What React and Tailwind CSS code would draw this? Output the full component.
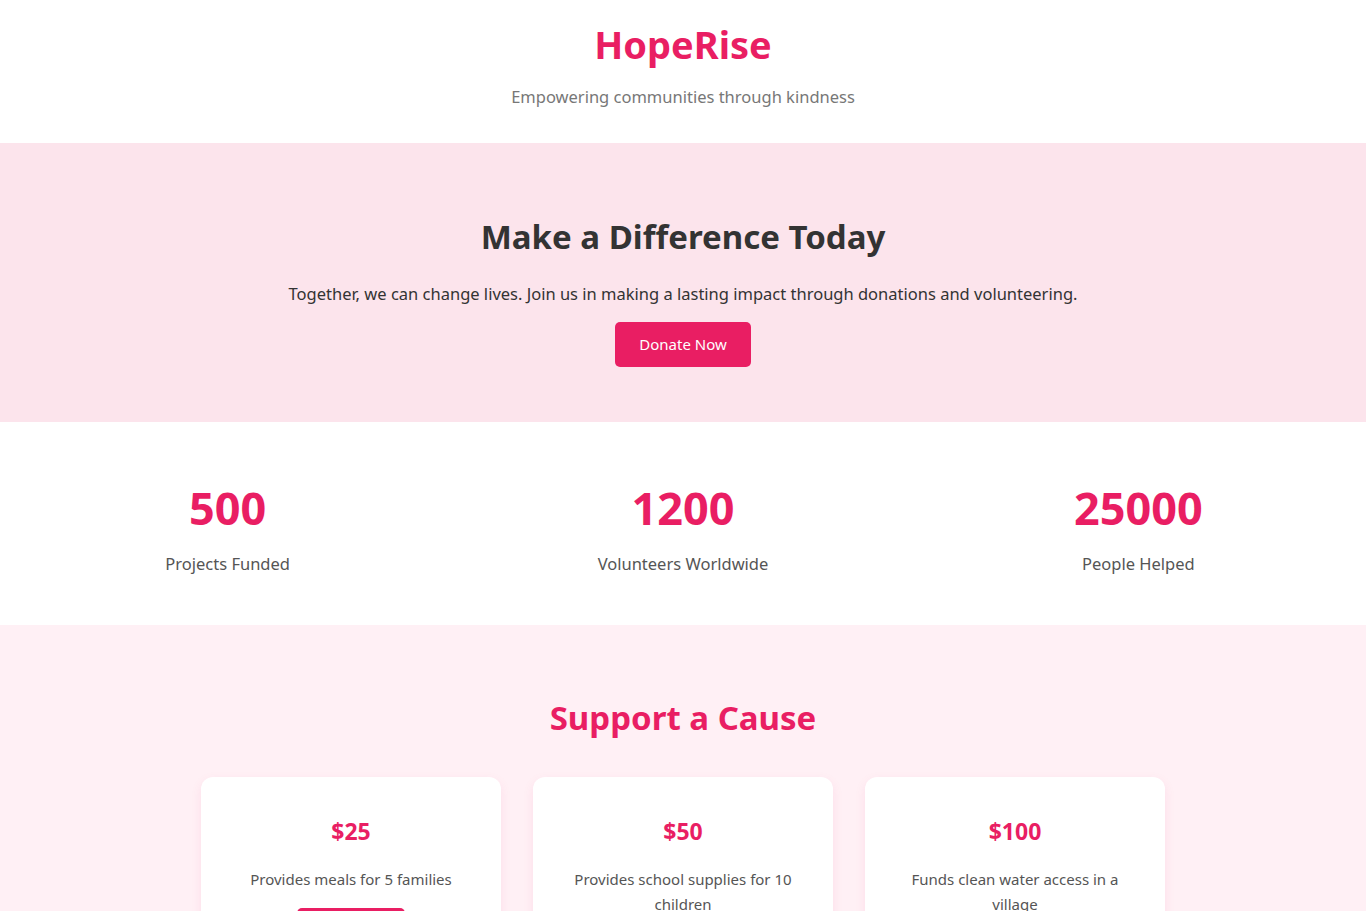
import React from "react";

const stats = [
  { value: "500", label: "Projects Funded" },
  { value: "1200", label: "Volunteers Worldwide" },
  { value: "25000", label: "People Helped" },
];

const causes = [
  { amount: "$25", text: "Provides meals for 5 families" },
  { amount: "$50", text: "Provides school supplies for 10 children" },
  { amount: "$100", text: "Funds clean water access in a village" },
];

function App() {
  return (
    <div className="min-h-screen bg-white text-[#333] font-['Noto_Sans',sans-serif]">
      {/* header */}
      <header className="pt-[20px] pb-[33px] text-center">
        <h1 className="text-[38px] leading-[48px] font-bold text-[#e91e63]">HopeRise</h1>
        <p className="mt-[15px] text-[16.5px] leading-[27px] text-[#777]">
          Empowering communities through kindness
        </p>
      </header>

      {/* hero */}
      <section className="bg-[#fce4ec] pt-[73px] pb-[55px] text-center">
        <h2 className="text-[33px] leading-[42px] font-bold text-[#333]">Make a Difference Today</h2>
        <p className="mt-[22px] text-[16.5px] leading-[27px] text-[#333]">
          Together, we can change lives. Join us in making a lasting impact through donations and volunteering.
        </p>
        <button className="mt-[15px] h-[45px] px-6 rounded-[5px] bg-[#e91e63] text-white text-[15px]">
          Donate Now
        </button>
      </section>

      {/* stats */}
      <section className="grid grid-cols-3 text-center pt-[57px] pb-[48px]">
        {stats.map((s) => (
          <div key={s.label}>
            <div className="text-[45px] leading-[58px] font-bold text-[#e91e63]">{s.value}</div>
            <div className="mt-[13px] text-[16.5px] leading-[27px] text-[#555]">{s.label}</div>
          </div>
        ))}
      </section>

      {/* causes */}
      <section className="bg-[#fff0f5] pt-[72px] pb-[60px]">
        <h2 className="text-center text-[33px] leading-[42px] font-bold text-[#e91e63]">Support a Cause</h2>
        <div className="mt-[38px] flex justify-center gap-8">
          {causes.map((c) => (
            <div
              key={c.amount}
              className="w-[300px] bg-white rounded-xl px-[30px] pt-[39px] pb-[30px] text-center shadow-[0_4px_12px_rgba(233,30,99,0.08)]"
            >
              <h3 className="text-[23px] leading-[30px] font-bold text-[#e91e63]">{c.amount}</h3>
              <p className="mt-[21px] text-[15px] leading-[25px] text-[#555]">{c.text}</p>
              <button className="mt-[16px] h-[40px] px-7 rounded-[5px] bg-[#e91e63] text-white text-[15px]">
                Donate
              </button>
            </div>
          ))}
        </div>
      </section>
    </div>
  );
}

export default App;
